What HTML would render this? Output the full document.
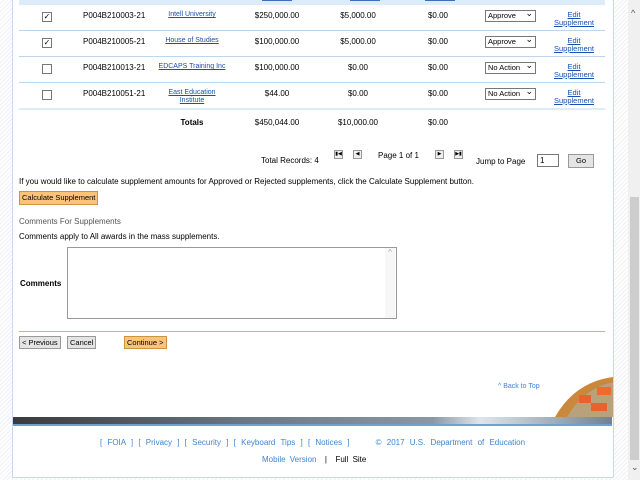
<!DOCTYPE html>
<html><head><style>
body{margin:0;width:640px;height:480px;overflow:hidden;position:relative;font-family:"Liberation Sans",sans-serif;font-size:8px;color:#000;background:repeating-linear-gradient(135deg,#fff 0 2px,#eef0f3 2px 3px);}
.a{position:absolute;white-space:nowrap}
.c{text-align:center}
a,.l{color:#1a4fb0;text-decoration:underline}
.panel{position:absolute;left:12px;top:0;width:600px;height:477px;background:#fff;border-left:1px solid #c8d8ee;border-right:1px solid #c8d8ee;border-bottom:1px solid #c8d8ee}
.hl{position:absolute;left:19px;width:586px;height:1px;background:#bcd6ee}
.cb{position:absolute;width:8px;height:8px;border:1px solid #777;background:#fff;font-size:8px;line-height:8px;text-align:center}
.sel{position:absolute;left:485px;width:47px;height:10px;border:1px solid #777;background:#fff;font-size:7.5px;line-height:10px;padding-left:2px;box-sizing:content-box}
.sel:after{content:"⌄";position:absolute;right:2px;top:-3px;font-size:9px}
.btn{position:absolute;height:11px;border:1px solid #999;background:#e4e4e4;font-size:7.5px;line-height:11px;padding:0 2px}
.or{background:#fbc27a;border-color:#c9963f}
</style></head><body>
<div class="panel"></div>
<div class="a" style="left:19px;top:0;width:586px;height:5px;background:#dcecf8"></div>
<div class="a" style="left:262px;top:0;width:30px;height:1px;background:#3a6fc0"></div>
<div class="a" style="left:350px;top:0;width:30px;height:1px;background:#3a6fc0"></div>
<div class="a" style="left:425px;top:0;width:30px;height:1px;background:#3a6fc0"></div>
<div class="hl" style="top:30px"></div><div class="hl" style="top:56px"></div><div class="hl" style="top:82px"></div><div class="hl" style="top:108px;height:2px;background:#dcecf8"></div>

<div class="cb" style="left:42px;top:12px">✓</div>
<div class="cb" style="left:42px;top:38px">✓</div>
<div class="cb" style="left:42px;top:64px"></div>
<div class="cb" style="left:42px;top:90px"></div>

<div class="a" style="left:83px;top:11px">P004B210003-21</div>
<div class="a" style="left:83px;top:37px">P004B210005-21</div>
<div class="a" style="left:83px;top:63px">P004B210013-21</div>
<div class="a" style="left:83px;top:89px">P004B210051-21</div>

<div class="a c l" style="left:152px;width:80px;top:11px;font-size:7px">Intell University</div>
<div class="a c l" style="left:152px;width:80px;top:37px;font-size:7px">House of Studies</div>
<div class="a c l" style="left:152px;width:80px;top:63px;font-size:7px">EDCAPS Training Inc</div>
<div class="a c l" style="left:152px;width:80px;top:89px;font-size:7px;line-height:8px">East Education<br>Institute</div>

<div class="a c" style="left:237px;width:80px;top:11px">$250,000.00</div>
<div class="a c" style="left:237px;width:80px;top:37px">$100,000.00</div>
<div class="a c" style="left:237px;width:80px;top:63px">$100,000.00</div>
<div class="a c" style="left:237px;width:80px;top:89px">$44.00</div>
<div class="a c" style="left:237px;width:80px;top:118px">$450,044.00</div>

<div class="a c" style="left:318px;width:80px;top:11px">$5,000.00</div>
<div class="a c" style="left:318px;width:80px;top:37px">$5,000.00</div>
<div class="a c" style="left:318px;width:80px;top:63px">$0.00</div>
<div class="a c" style="left:318px;width:80px;top:89px">$0.00</div>
<div class="a c" style="left:318px;width:80px;top:118px">$10,000.00</div>

<div class="a c" style="left:398px;width:80px;top:11px">$0.00</div>
<div class="a c" style="left:398px;width:80px;top:37px">$0.00</div>
<div class="a c" style="left:398px;width:80px;top:63px">$0.00</div>
<div class="a c" style="left:398px;width:80px;top:89px">$0.00</div>
<div class="a c" style="left:398px;width:80px;top:118px">$0.00</div>

<div class="a c" style="left:152px;width:80px;top:118px;font-weight:bold">Totals</div>

<div class="sel" style="top:10px">Approve</div>
<div class="sel" style="top:36px">Approve</div>
<div class="sel" style="top:62px">No Action</div>
<div class="sel" style="top:88px">No Action</div>

<div class="a c l" style="left:544px;width:60px;top:11px;line-height:8px;font-size:7.5px">Edit<br>Supplement</div>
<div class="a c l" style="left:544px;width:60px;top:37px;line-height:8px;font-size:7.5px">Edit<br>Supplement</div>
<div class="a c l" style="left:544px;width:60px;top:63px;line-height:8px;font-size:7.5px">Edit<br>Supplement</div>
<div class="a c l" style="left:544px;width:60px;top:89px;line-height:8px;font-size:7.5px">Edit<br>Supplement</div>

<div class="a" style="left:261px;top:156px">Total Records: 4</div>
<div class="a" style="left:334px;top:150px;width:7px;height:7px;border:1px solid #999;background:#eee;font-size:5px;line-height:7px;text-align:center">▮◀</div>
<div class="a" style="left:353px;top:150px;width:7px;height:7px;border:1px solid #999;background:#eee;font-size:5px;line-height:7px;text-align:center">◀</div>
<div class="a" style="left:378px;top:151px">Page 1 of 1</div>
<div class="a" style="left:435px;top:150px;width:7px;height:7px;border:1px solid #999;background:#eee;font-size:5px;line-height:7px;text-align:center">▶</div>
<div class="a" style="left:454px;top:150px;width:7px;height:7px;border:1px solid #999;background:#eee;font-size:5px;line-height:7px;text-align:center">▶▮</div>
<div class="a" style="left:476px;top:157px">Jump to Page</div>
<div class="a" style="left:537px;top:154px;width:22px;border:1px solid #777;background:#fff;line-height:11px;padding-left:2px;box-sizing:border-box;height:13px">1</div>
<div class="btn" style="left:568px;top:154px;width:20px;height:12px;text-align:center;line-height:12px">Go</div>

<div class="a" style="left:19px;top:177px">If you would like to calculate supplement amounts for Approved or Rejected supplements, click the Calculate Supplement button.</div>
<div class="btn or" style="left:19px;top:191px;height:12px;line-height:12px">Calculate Supplement</div>
<div class="a" style="left:19px;top:217px;color:#555">Comments For Supplements</div>
<div class="a" style="left:19px;top:232px">Comments apply to All awards in the mass supplements.</div>
<div class="a" style="left:20px;top:279px;font-weight:bold">Comments</div>
<div class="a" style="left:67px;top:247px;width:328px;height:70px;border:1px solid #999;background:#fff"></div>
<div class="a" style="left:385px;top:248px;width:10px;height:70px;background:#f7f7f7;color:#aaa;font-size:8px;text-align:center;line-height:10px">^</div>
<div class="a" style="left:19px;top:331px;width:586px;height:1px;background:#99b8e0"></div>
<div class="btn" style="left:19px;top:336px">&lt; Previous</div>
<div class="btn" style="left:67px;top:336px">Cancel</div>
<div class="btn or" style="left:124px;top:336px">Continue &gt;</div>
<div class="a" style="left:498px;top:383px;color:#3f84d0;font-size:7px">^ Back to Top</div>
<svg class="a" style="left:555px;top:377px" width="58" height="40"><path d="M0 40 Q20 5 58 0 L58 40Z" fill="#c9883c"/><path d="M12 40 Q28 12 58 5 L58 40Z" fill="#b8a27c"/><rect x="24" y="18" width="12" height="8" fill="#e8622a"/><rect x="42" y="10" width="14" height="8" fill="#f06a2c"/><rect x="36" y="26" width="16" height="8" fill="#e8622a"/></svg>
<div class="a" style="left:13px;top:417px;width:599px;height:8px;background:linear-gradient(90deg,#3a3a3a,#6b7a86 40%,#8898a4 70%,#dfe6ea 78%,#6f8290)"></div>
<div class="a" style="left:13px;top:424px;width:599px;height:2px;background:#6ea0d8"></div>
<div class="a" style="left:100px;top:438px;color:#3f84d0;word-spacing:3px">[ FOIA ] [ Privacy ] [ Security ] [ Keyboard Tips ] [ Notices ] &nbsp;&nbsp;&nbsp; © 2017 U.S. Department of Education</div>
<div class="a" style="left:262px;top:455px;word-spacing:2px"><span style="color:#3f84d0">Mobile Version</span> &nbsp;| &nbsp;Full Site</div>
<div class="a" style="left:628px;top:0;width:12px;height:480px;background:#f0f0f0"></div>
<div class="a" style="left:630px;top:197px;width:9px;height:263px;background:#cdcdcd"></div>
<div class="a" style="left:631px;top:8px;font-size:9px;color:#555">^</div>
<div class="a" style="left:631px;top:462px;font-size:9px;color:#555">⌄</div>
</body></html>
